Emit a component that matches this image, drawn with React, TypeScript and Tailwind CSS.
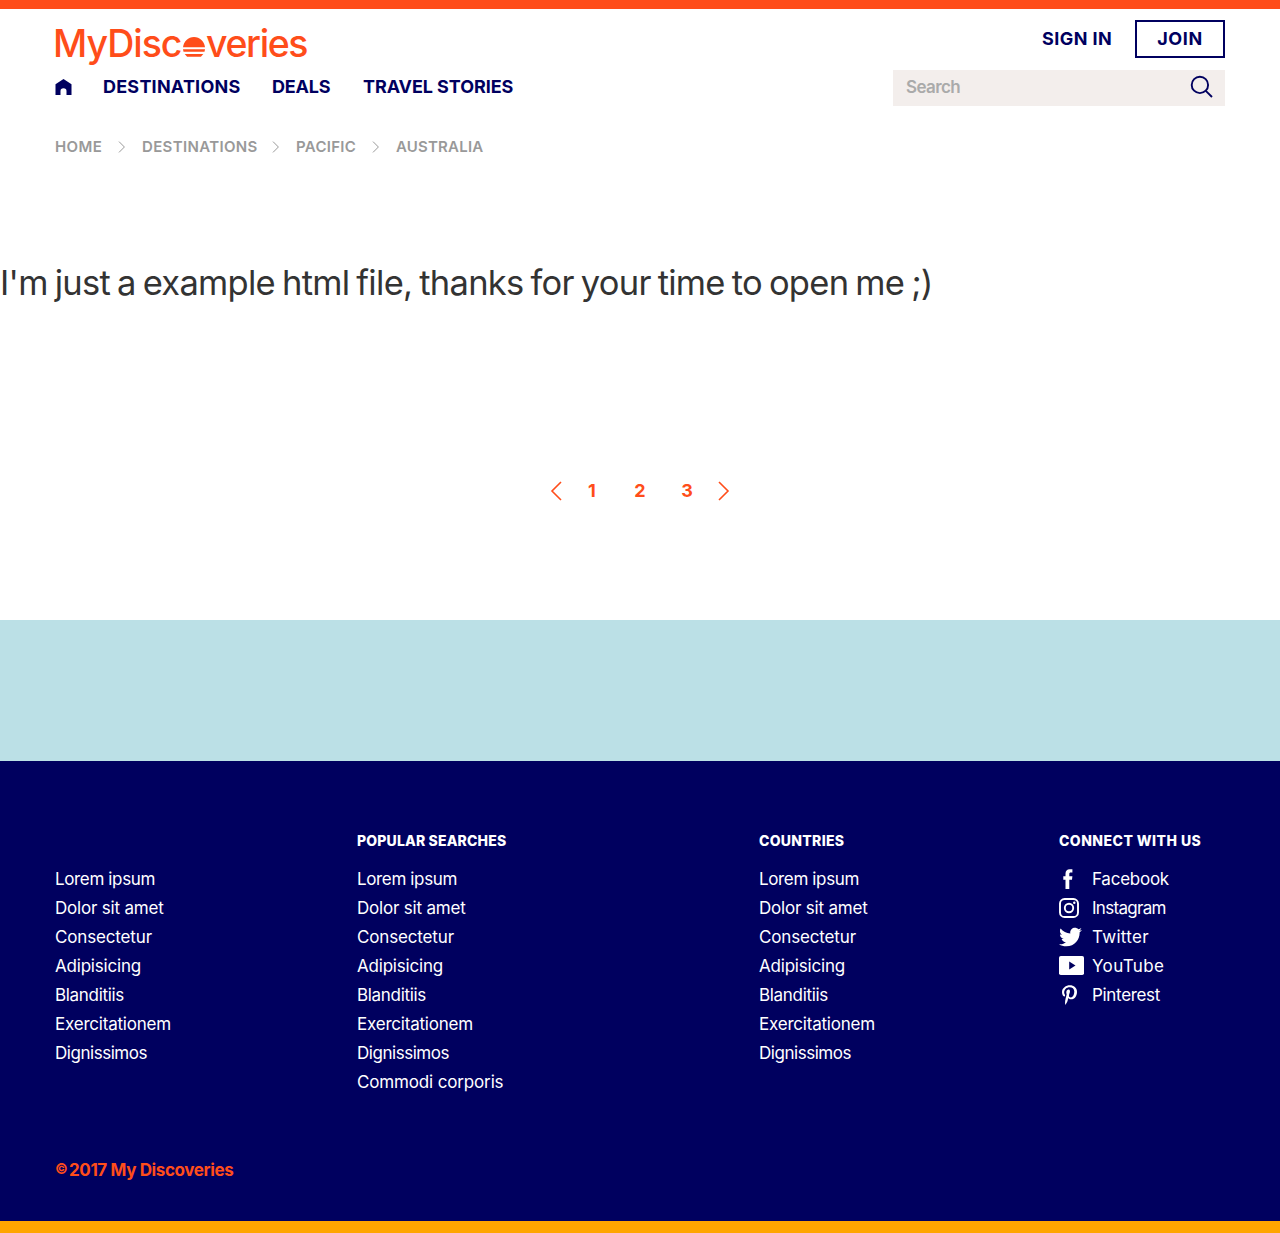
import type { ReactNode } from "react";
import { FaTwitter, FaPinterestP } from "react-icons/fa";

function Logo() {
  return (
    <a href="#" aria-label="MyDiscoveries" className="flex h-[41px] items-center text-[37.5px] font-medium leading-none text-[#ff4d1a]">
      <span className="-ml-0.5 w-[130px] tracking-[-1.02px]">MyDisc</span>
      <svg width="22" height="20" viewBox="0 0 22 20" fill="currentColor" className="mt-[7px] shrink-0">
        <path d="M0 10.3C.6 4.3 5.2 0 11 0s10.400 4.300 11 10.300z" />
        <path d="M0 12.200h22l-.5 2.600H.5z" />
        <path d="M1.700 17h18.600l-2.400 2.800H4.100z" />
      </svg>
      <span className="ml-px tracking-[-1.4px]">veries</span>
    </a>
  );
}

function Chevron({ className, left = false }: { className: string; left?: boolean }) {
  return (
    <svg viewBox="0 0 12 20" fill="none" stroke="currentColor" className={className}>
      <path d={left ? "M11 1 2 10l9 9" : "M1 1l9 9-9 9"} vectorEffect="non-scaling-stroke" />
    </svg>
  );
}

const icons: Record<string, ReactNode> = {
  Facebook: (
    <svg width="10" height="20" viewBox="0 0 10 20" fill="currentColor" className="ml-[3.5px]">
      <path d="M2.500 20V10.700H.3V7.300h2.200V4.700C2.500 1.700 4 .2 6.700.2h2.700v3.200H7.700c-1 0-1.400.5-1.400 1.500v2.400h3.100L9 10.700H6.300V20z" />
    </svg>
  ),
  Instagram: (
    <svg width="20" height="20" viewBox="0 0 20 20" fill="none" stroke="currentColor" strokeWidth="1.9">
      <rect x="1" y="1" width="18" height="18" rx="4.600" />
      <circle cx="10" cy="10" r="4.200" />
      <circle cx="15.300" cy="4.700" r="1.200" fill="currentColor" stroke="none" />
    </svg>
  ),
  Twitter: <FaTwitter className="h-6 w-[23px]" />,
  YouTube: (
    <svg width="25" height="19" viewBox="0 0 25 19">
      <rect width="25" height="19" rx="1.800" fill="currentColor" />
      <path d="M10.200 5.500v8l6.300-4z" fill="#00005f" />
    </svg>
  ),
  Pinterest: <FaPinterestP className="ml-[3px] h-5 w-[15px]" />,
};

const links: [string, string][] = [
  ["Lorem ipsum", "tracking-[-0.36px]"],
  ["Dolor sit amet", "tracking-[-0.2px]"],
  ["Consectetur", "tracking-[-0.15px]"],
  ["Adipisicing", "tracking-[-0.2px]"],
  ["Blanditiis", "tracking-[-0.31px]"],
  ["Exercitationem", "tracking-[-0.21px]"],
  ["Dignissimos", "tracking-[-0.46px]"],
  ["Commodi corporis", "tracking-[-0.15px]"],
];

const social: [string, string][] = [
  ["Facebook", "tracking-[-0.25px]"],
  ["Instagram", "tracking-[-0.7px]"],
  ["Twitter", "tracking-[0.3px]"],
  ["YouTube", "tracking-[0.35px]"],
  ["Pinterest", "tracking-[-0.32px]"],
];

function FooterColumn({ title, titleClass = "", count }: { title?: string; titleClass?: string; count: number }) {
  return (
    <div>
      <h2 className={"mb-[14px] h-5 text-sm leading-5 font-extrabold whitespace-nowrap " + titleClass}>{title}</h2>
      <ul>
        {links.slice(0, count).map(([label, spacing]) => (
          <li key={label} className={"h-[29px] text-[17px] leading-[29px] whitespace-nowrap " + spacing}>
            <a href="#">{label}</a>
          </li>
        ))}
      </ul>
    </div>
  );
}

export default function App() {
  return (
    <div className="flex h-[1233px] w-[1280px] flex-col overflow-hidden border-t-[9px] border-b-[12px] border-t-[#ff4d1a] border-b-[#ffa500] bg-white font-['Inter',sans-serif] text-[#333]">
      <header className="mx-auto w-[1170px] text-[#00005f]">
        <div className="flex justify-between">
          <div className="pt-[14px]">
            <Logo />
            <nav className="mt-[11px] flex h-[22px] items-center text-[18px] font-bold whitespace-nowrap">
              <a href="#" aria-label="Home" className="w-12">
                <svg width="17" height="16" viewBox="0 0 17 16" fill="currentColor" className="mt-px">
                  <path d="M.5 5.200 8.500 0l8 5.200V16h-5v-4a3 2.800 0 0 0-6 0v4h-5z" />
                </svg>
              </a>
              <a href="#" className="w-[169px] tracking-[0.22px]">DESTINATIONS</a>
              <a href="#" className="w-[91px] tracking-[-0.2px]">DEALS</a>
              <a href="#" className="tracking-[-0.08px]">TRAVEL STORIES</a>
            </nav>
          </div>
          <div className="flex w-[332px] flex-col pt-[11px]">
            <div className="flex h-[38px] items-center justify-end text-[18px] font-bold">
              <a href="#" className="mr-[23px] mb-0.5 tracking-[0.4px]">SIGN IN</a>
              <a href="#" className="flex h-full w-[90px] items-center justify-center border-2 border-[#00005f] pb-0.5 tracking-[0.6px]">JOIN</a>
            </div>
            <div className="mt-3 flex h-9 items-center justify-between bg-[#f3eeec] pr-3 pl-[13px]">
              <span className="-mt-px text-[17px] font-semibold tracking-[-0.6px] text-[#aaa]">Search</span>
              <svg width="23" height="23" viewBox="0 0 23 23" fill="none" stroke="currentColor" strokeWidth="1.9" className="-mt-1">
                <circle cx="9.900" cy="9.900" r="8.200" />
                <path d="m15.800 15.800 6.200 6.200" />
              </svg>
            </div>
          </div>
        </div>
        <nav className="mt-[30px] flex h-[22px] items-center text-[15px] font-semibold whitespace-nowrap text-[#999]">
          <a href="#" className="w-[63px] tracking-[0.4px]">HOME</a>
          <Chevron className="mr-[16px] h-3 w-2" />
          <a href="#" className="w-[130px] tracking-[0.35px]">DESTINATIONS</a>
          <Chevron className="mr-[16px] h-3 w-2" />
          <a href="#" className="w-[76px] tracking-[0.3px]">PACIFIC</a>
          <Chevron className="mr-[16px] h-3 w-2" />
          <a href="#" className="tracking-[0.2px]">AUSTRALIA</a>
        </nav>
      </header>

      <main className="flex h-[462px] shrink-0 flex-col">
        <h1 className="mt-[101px] h-12 text-[34.5px] leading-[48px] tracking-[-0.72px] whitespace-nowrap [word-spacing:-2px]">
          I'm just a example html file, thanks for your time to open me ;)
        </h1>
        <nav className="mt-[172px] flex items-center justify-center text-[18px] leading-6 font-bold text-[#ff4d1a]">
          <a href="#" aria-label="Previous"><Chevron left className="h-5 w-3 stroke-[1.6]" /></a>
          <a href="#" className="ml-[18px] w-6 text-center">1</a>
          <a href="#" className="ml-6 w-6 text-center">2</a>
          <a href="#" className="ml-[23px] w-6 text-center">3</a>
          <a href="#" aria-label="Next" className="ml-[19px]"><Chevron className="h-5 w-3 stroke-[1.6]" /></a>
        </nav>
      </main>

      <div className="h-[141px] shrink-0 bg-[#bbe0e6]" />

      <footer className="h-[460px] shrink-0 bg-[#00005f] text-white">
        <div className="mx-auto flex h-full w-[1170px] flex-col pt-[70px]">
          <div className="grid grid-cols-[302px_402px_300px_1fr]">
            <FooterColumn count={7} />
            <FooterColumn title="POPULAR SEARCHES" titleClass="tracking-[0.16px]" count={8} />
            <FooterColumn title="COUNTRIES" titleClass="tracking-[0.3px]" count={7} />
            <div>
              <h2 className="mb-[14px] h-5 text-sm leading-5 font-extrabold tracking-[0.46px] whitespace-nowrap">CONNECT WITH US</h2>
              <ul>
                {social.map(([label, spacing]) => (
                  <li key={label} className="h-[29px] text-[17px] leading-[29px]">
                    <a href="#" className="flex items-center">
                      <span className="flex h-[29px] w-[33px] shrink-0 items-center pb-0.5">{icons[label]}</span>
                      <span className={spacing}>{label}</span>
                    </a>
                  </li>
                ))}
              </ul>
            </div>
          </div>
          <p className="mt-[62px] flex h-6 items-center text-[17px] font-bold text-[#ff4d1a]">
            <span className="-mt-[5px] w-[14px] text-[14px]">©</span>
            <span className="tracking-[-0.38px]">2017 My Discoveries</span>
          </p>
        </div>
      </footer>
    </div>
  );
}
